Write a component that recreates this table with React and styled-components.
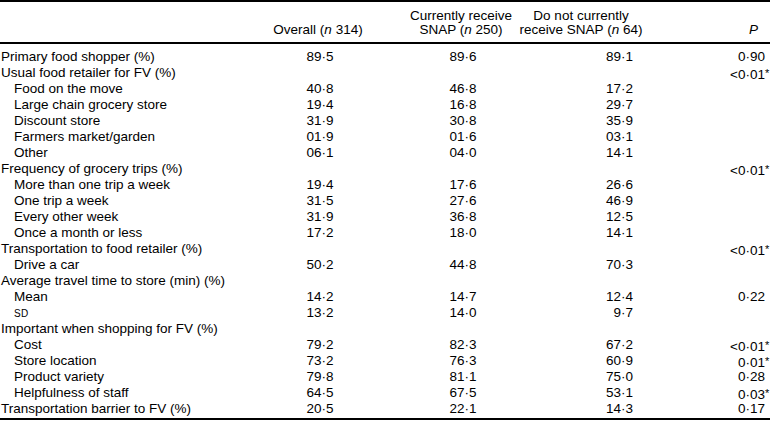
import React from "react";
import styled, { createGlobalStyle } from "styled-components";

const Global = createGlobalStyle`
  html, body { margin: 0; padding: 0; background: #fff; }
  body { font-family: "Liberation Sans", Arial, sans-serif; color: #000; }
`;

const Table = styled.div`
  width: 770px;
  display: grid;
  grid-template-columns: 255px 126px 160px 104px 1fr;
  font-size: 13.5px;
  border-top: 2px solid #000;
  border-bottom: 2px solid #000;
  box-sizing: border-box;
`;

const HeadCell = styled.div`
  height: 42px;
  box-sizing: border-box;
  border-bottom: 2px solid #000;
  display: flex;
  flex-direction: column;
  justify-content: flex-end;
  align-items: ${(p) => (p.$align === "right" ? "flex-end" : "center")};
  padding-bottom: 5px;
  line-height: 14px;
  white-space: nowrap;
  text-align: ${(p) => p.$align || "center"};
  padding-right: ${(p) => p.$pr || 0}px;
`;

const BodyCell = styled.div`
  height: 16px;
  line-height: 16px;
  white-space: nowrap;
  text-align: ${(p) => p.$align || "center"};
  padding-left: ${(p) => (p.$indent ? 14 : 1)}px;
  padding-right: ${(p) => p.$pr || 0}px;
  margin-top: ${(p) => (p.$first ? 5 : 0)}px;
  margin-bottom: ${(p) => (p.$last ? 1 : 0)}px;
`;

const Num = styled.span`
  display: inline-block;
  width: 30px;
  text-align: right;
`;

const Star = styled.span`
  display: inline-block;
  width: 0;
  font-size: 11px;
  vertical-align: 2px;
`;

const Sc = styled.span`
  font-size: 10px;
  letter-spacing: 0.3px;
`;

const rows = [
  ["Primary food shopper (%)", 0, "89·5", "89·6", "89·1", "0·90"],
  ["Usual food retailer for FV (%)", 0, "", "", "", "<0·01*"],
  ["Food on the move", 1, "40·8", "46·8", "17·2", ""],
  ["Large chain grocery store", 1, "19·4", "16·8", "29·7", ""],
  ["Discount store", 1, "31·9", "30·8", "35·9", ""],
  ["Farmers market/garden", 1, "01·9", "01·6", "03·1", ""],
  ["Other", 1, "06·1", "04·0", "14·1", ""],
  ["Frequency of grocery trips (%)", 0, "", "", "", "<0·01*"],
  ["More than one trip a week", 1, "19·4", "17·6", "26·6", ""],
  ["One trip a week", 1, "31·5", "27·6", "46·9", ""],
  ["Every other week", 1, "31·9", "36·8", "12·5", ""],
  ["Once a month or less", 1, "17·2", "18·0", "14·1", ""],
  ["Transportation to food retailer (%)", 0, "", "", "", "<0·01*"],
  ["Drive a car", 1, "50·2", "44·8", "70·3", ""],
  ["Average travel time to store (min) (%)", 0, "", "", "", ""],
  ["Mean", 1, "14·2", "14·7", "12·4", "0·22"],
  ["SD", 1, "13·2", "14·0", "9·7", ""],
  ["Important when shopping for FV (%)", 0, "", "", "", ""],
  ["Cost", 1, "79·2", "82·3", "67·2", "<0·01*"],
  ["Store location", 1, "73·2", "76·3", "60·9", "0·01*"],
  ["Product variety", 1, "79·8", "81·1", "75·0", "0·28"],
  ["Helpfulness of staff", 1, "64·5", "67·5", "53·1", "0·03*"],
  ["Transportation barrier to FV (%)", 0, "20·5", "22·1", "14·3", "0·17"],
];

function PVal({ v }) {
  if (!v) return null;
  if (v.endsWith("*")) {
    return (
      <>
        {v.slice(0, -1)}
        <Star>*</Star>
      </>
    );
  }
  return v;
}

export default function App() {
  const n = rows.length;
  return (
    <>
      <Global />
      <Table>
        <HeadCell />
        <HeadCell>
          <span>
            Overall (<i>n</i> 314)
          </span>
        </HeadCell>
        <HeadCell>
          <span>Currently receive</span>
          <span>
            SNAP (<i>n</i> 250)
          </span>
        </HeadCell>
        <HeadCell $pr={24}>
          <span>Do not currently</span>
          <span>
            receive SNAP (<i>n</i> 64)
          </span>
        </HeadCell>
        <HeadCell $align="right" $pr={12}>
          <span>
            <i>P</i>
          </span>
        </HeadCell>
        {rows.map(([label, indent, a, b, c, p], i) => {
          const first = i === 0;
          const last = i === n - 1;
          return (
            <React.Fragment key={i}>
              <BodyCell $align="left" $indent={indent} $first={first} $last={last}>
                {label === "SD" ? <Sc>SD</Sc> : label}
              </BodyCell>
              <BodyCell $first={first} $last={last}>
                <Num>{a}</Num>
              </BodyCell>
              <BodyCell $first={first} $last={last}>
                <Num>{b}</Num>
              </BodyCell>
              <BodyCell $align="right" $pr={12} $first={first} $last={last}>
                {c}
              </BodyCell>
              <BodyCell $align="right" $pr={5} $first={first} $last={last}>
                <PVal v={p} />
              </BodyCell>
            </React.Fragment>
          );
        })}
      </Table>
    </>
  );
}
